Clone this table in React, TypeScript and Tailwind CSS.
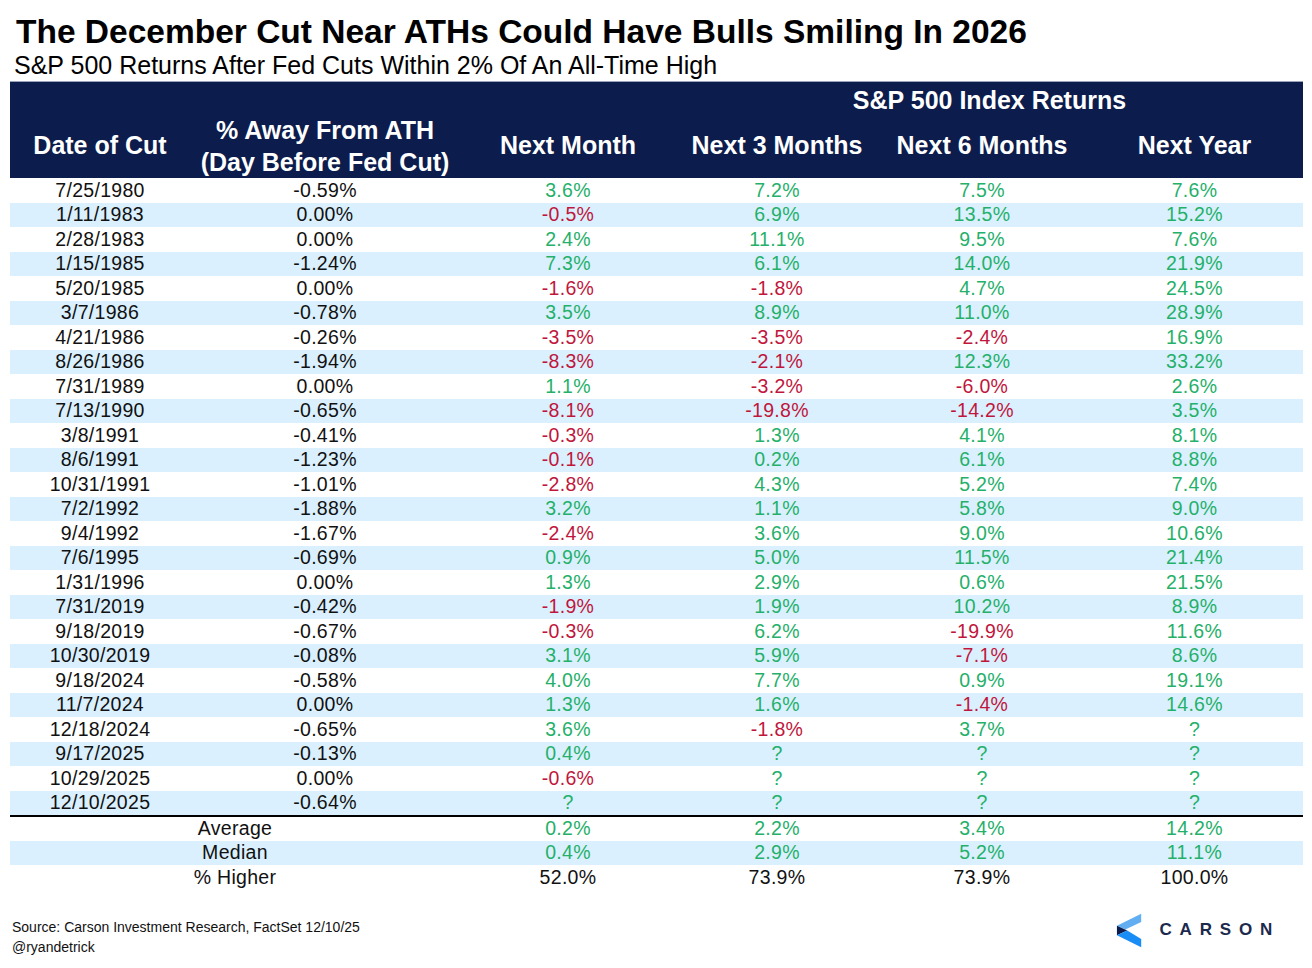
const rows: string[][] = [
  ['7/25/1980', '-0.59%', '3.6%', '7.2%', '7.5%', '7.6%'],
  ['1/11/1983', '0.00%', '-0.5%', '6.9%', '13.5%', '15.2%'],
  ['2/28/1983', '0.00%', '2.4%', '11.1%', '9.5%', '7.6%'],
  ['1/15/1985', '-1.24%', '7.3%', '6.1%', '14.0%', '21.9%'],
  ['5/20/1985', '0.00%', '-1.6%', '-1.8%', '4.7%', '24.5%'],
  ['3/7/1986', '-0.78%', '3.5%', '8.9%', '11.0%', '28.9%'],
  ['4/21/1986', '-0.26%', '-3.5%', '-3.5%', '-2.4%', '16.9%'],
  ['8/26/1986', '-1.94%', '-8.3%', '-2.1%', '12.3%', '33.2%'],
  ['7/31/1989', '0.00%', '1.1%', '-3.2%', '-6.0%', '2.6%'],
  ['7/13/1990', '-0.65%', '-8.1%', '-19.8%', '-14.2%', '3.5%'],
  ['3/8/1991', '-0.41%', '-0.3%', '1.3%', '4.1%', '8.1%'],
  ['8/6/1991', '-1.23%', '-0.1%', '0.2%', '6.1%', '8.8%'],
  ['10/31/1991', '-1.01%', '-2.8%', '4.3%', '5.2%', '7.4%'],
  ['7/2/1992', '-1.88%', '3.2%', '1.1%', '5.8%', '9.0%'],
  ['9/4/1992', '-1.67%', '-2.4%', '3.6%', '9.0%', '10.6%'],
  ['7/6/1995', '-0.69%', '0.9%', '5.0%', '11.5%', '21.4%'],
  ['1/31/1996', '0.00%', '1.3%', '2.9%', '0.6%', '21.5%'],
  ['7/31/2019', '-0.42%', '-1.9%', '1.9%', '10.2%', '8.9%'],
  ['9/18/2019', '-0.67%', '-0.3%', '6.2%', '-19.9%', '11.6%'],
  ['10/30/2019', '-0.08%', '3.1%', '5.9%', '-7.1%', '8.6%'],
  ['9/18/2024', '-0.58%', '4.0%', '7.7%', '0.9%', '19.1%'],
  ['11/7/2024', '0.00%', '1.3%', '1.6%', '-1.4%', '14.6%'],
  ['12/18/2024', '-0.65%', '3.6%', '-1.8%', '3.7%', '?'],
  ['9/17/2025', '-0.13%', '0.4%', '?', '?', '?'],
  ['10/29/2025', '0.00%', '-0.6%', '?', '?', '?'],
  ['12/10/2025', '-0.64%', '?', '?', '?', '?'],
]

const summary: { label: string; values: string[]; plain?: boolean }[] = [
  { label: 'Average', values: ['0.2%', '2.2%', '3.4%', '14.2%'] },
  { label: 'Median', values: ['0.4%', '2.9%', '5.2%', '11.1%'] },
  { label: '% Higher', values: ['52.0%', '73.9%', '73.9%', '100.0%'], plain: true },
]

const cols = 'grid grid-cols-[180px_270px_216px_202px_208px_217px]'

function tone(v: string) {
  return v.startsWith('-') ? 'text-[#c0163c]' : 'text-[#25b06a]'
}

function CarsonMark() {
  return (
    <svg width="28" height="35" viewBox="0 0 30 36">
      <defs>
        <pattern id="dots" width="2" height="2" patternUnits="userSpaceOnUse">
          <rect width="2" height="2" fill="#5aaaf2" />
          <circle cx="1" cy="1" r="0.45" fill="#9ccdf8" />
        </pattern>
      </defs>
      <polygon points="27,0 27,9 10,17 1,13" fill="url(#dots)" />
      <polygon points="1,13 12,18 1,23" fill="#0c1c4c" />
      <polygon points="1,23 12,18 27,27 27,36" fill="#1a8cf5" />
    </svg>
  )
}

export default function App() {
  return (
    <div className="h-[968px] w-[1312px] bg-white font-['Liberation_Sans',Arial,sans-serif] text-[#111]">
      <div className="px-[16px] pt-[12px]">
        <h1 className="text-[33.5px] font-bold leading-[40px] text-black">
          The December Cut Near ATHs Could Have Bulls Smiling In 2026
        </h1>
        <p className="-ml-[2px] -mt-[1px] text-[25px] leading-[29px] text-black">
          S&amp;P 500 Returns After Fed Cuts Within 2% Of An All-Time High
        </p>
      </div>

      <div className="mx-[10px] mt-[1px] w-[1293px]">
        <div className="h-[97px] border-t border-[#9aa3b8] bg-[#0c1c4c] text-[25px] font-bold text-white">
          <div className={`${cols} h-[31px]`}>
            <div className="col-span-3 col-start-4 flex items-center justify-center">S&amp;P 500 Index Returns</div>
          </div>
          <div className={`${cols} h-[65px]`}>
            <div className="flex items-center justify-center">Date of Cut</div>
            <div className="flex flex-col items-center justify-center leading-[32px]">
              <span>% Away From ATH</span>
              <span>(Day Before Fed Cut)</span>
            </div>
            <div className="flex items-center justify-center">Next Month</div>
            <div className="flex items-center justify-center">Next 3 Months</div>
            <div className="flex items-center justify-center">Next 6 Months</div>
            <div className="flex items-center justify-center">Next Year</div>
          </div>
        </div>

        <div className="text-[19.5px] tracking-[0.3px]">
          {rows.map((r, i) => (
            <div key={r[0]} className={`${cols} h-[24.5px] items-center ${i % 2 ? 'bg-[#daf0fe]' : 'bg-white'}`}>
              <div className="text-center leading-none">{r[0]}</div>
              <div className="text-center leading-none">{r[1]}</div>
              {r.slice(2).map((v, j) => (
                <div key={j} className={`text-center leading-none ${tone(v)}`}>{v}</div>
              ))}
            </div>
          ))}
          {summary.map((s, i) => (
            <div
              key={s.label}
              className={`${cols} items-center ${i === 0 ? 'h-[25.5px] border-t-2 border-black' : 'h-[24.5px]'} ${i % 2 ? 'bg-[#daf0fe]' : 'bg-white'}`}
            >
              <div className="col-span-2 text-center leading-none">{s.label}</div>
              {s.values.map((v, j) => (
                <div key={j} className={`text-center leading-none ${s.plain ? 'text-[#111]' : tone(v)}`}>{v}</div>
              ))}
            </div>
          ))}
        </div>
      </div>

      <div className="mt-[27px] flex items-start justify-between pl-[12px] pr-[32px]">
        <div className="text-[14px] leading-[20px] text-[#111]">
          <p>Source: Carson Investment Research, FactSet 12/10/25</p>
          <p>@ryandetrick</p>
        </div>
        <div className="-mt-[4px] flex items-center gap-[16px]">
          <CarsonMark />
          <span className="text-[17px] font-bold tracking-[7.8px] text-[#1c2a4d]">CARSON</span>
        </div>
      </div>
    </div>
  )
}
